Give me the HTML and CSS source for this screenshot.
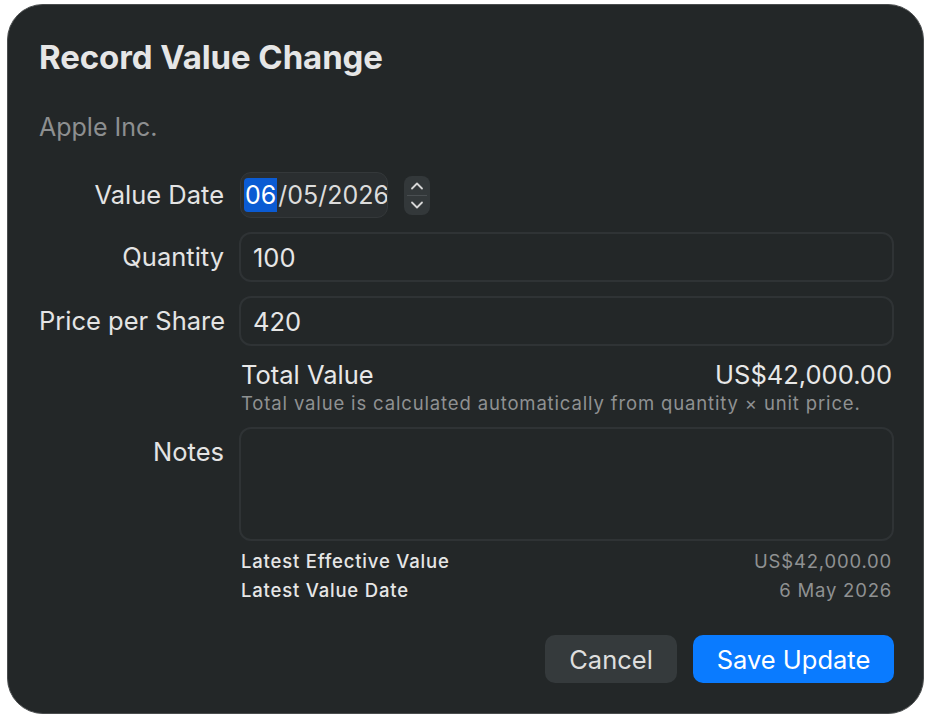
FILE: index.html
```html
<!DOCTYPE html>
<html lang="en">
<head>
<meta charset="UTF-8">
<title>Record Value Change</title>
<link rel="stylesheet" href="styles.css">
</head>
<body>

<div class="dialog">
  <h1>Record Value Change</h1>
  <div class="asset">Apple Inc.</div>

  <div class="form">
    <label class="lbl lbl-date">Value Date</label>
    <div class="date-row">
      <div class="date-field"><span class="sel">06</span>/05/2026</div>
      <div class="stepper">
        <svg width="26" height="39" viewBox="0 0 26 39">
          <path d="M8 12.5l5-5 5 5" fill="none" stroke="#d6d6d6" stroke-width="1.8" stroke-linecap="round" stroke-linejoin="round"/>
          <line x1="3" y1="19.5" x2="23" y2="19.5" stroke="#4a4f52" stroke-width="1"/>
          <path d="M8 26.5l5 5 5-5" fill="none" stroke="#d6d6d6" stroke-width="1.8" stroke-linecap="round" stroke-linejoin="round"/>
        </svg>
      </div>
    </div>

    <label class="lbl">Quantity</label>
    <div class="field">100</div>

    <label class="lbl">Price per Share</label>
    <div class="field">420</div>

    <div></div>
    <div class="total">
      <div class="total-line"><span>Total Value</span><span>US$42,000.00</span></div>
      <div class="hint">Total value is calculated automatically from quantity × unit price.</div>
    </div>

    <label class="lbl lbl-notes">Notes</label>
    <div class="notes"></div>

    <div></div>
    <div class="meta">
      <div class="meta-line"><span>Latest Effective Value</span><span class="v">US$42,000.00</span></div>
      <div class="meta-line"><span>Latest Value Date</span><span class="v">6 May 2026</span></div>
    </div>
  </div>

  <div class="actions">
    <button class="btn cancel">Cancel</button>
    <button class="btn save">Save Update</button>
  </div>
</div>

</body>
</html>
```

FILE: styles.css
```css
body{margin:0;background:#fff;font-family:Inter,"Noto Sans",sans-serif;color:#e4e4e4}
.dialog{margin:4px 8px 0 7px;width:917px;height:710px;box-sizing:border-box;background:#232728;border:1px solid #4a4d4e;border-radius:36px;padding:32px 29px 0 31px}
h1{margin:0;font-size:33px;font-weight:700;line-height:40px;letter-spacing:-0.1px;color:#e6e6e6}
.asset{margin-top:35px;font-size:25px;line-height:30px;color:#8d8f90}
.form{margin-top:30px;display:grid;grid-template-columns:185px 1fr;column-gap:15px;align-items:start}
.lbl{text-align:right;font-size:25.5px;line-height:30px;color:#e4e4e4;padding-top:10px;white-space:nowrap}
.lbl-date{padding-top:8px}
.date-row{display:flex;align-items:center;gap:16px;height:46px;margin-bottom:14px}
.date-field{height:46px;box-sizing:border-box;padding:0 0 0 3px;width:148px;display:flex;align-items:center;font-size:25px;background:#2a2e30;border:1px solid #34383a;border-radius:11px;color:#dcdcdc;overflow:hidden;white-space:nowrap;margin-left:1px}
.sel{background:#0b5bd3;color:#fff;border-radius:4px 0 0 4px;padding:2px 1px;margin-right:1px}
.stepper{width:26px;height:39px;background:#33383a;border-radius:8px}
.stepper svg{display:block}
.field{height:50px;box-sizing:border-box;border:2px solid #2f3335;border-radius:12px;padding:0 12px;display:flex;align-items:center;font-size:25.5px;color:#e6e6e6;margin-bottom:14px}
.total{padding:0 2px}
.total-line{display:flex;justify-content:space-between;font-size:25.5px;line-height:30px;color:#e8e8e8}
.hint{font-size:18.5px;line-height:24px;letter-spacing:0.85px;color:#8f9192;margin-top:1px;white-space:nowrap}
.notes{grid-column:2;height:114px;box-sizing:border-box;border:2px solid #2f3335;border-radius:12px;margin-top:12px}
.lbl-notes{margin-top:12px}
.meta{padding:0 2px;margin-top:6px}
.meta-line{display:flex;justify-content:space-between;font-size:18.5px;line-height:29px;font-weight:500;letter-spacing:0.8px;color:#e6e6e6}
.meta-line .v{font-weight:400;color:#8f9192}
.actions{display:flex;justify-content:flex-end;gap:16px;margin-top:30px}
.btn{border:none;font-family:inherit;font-size:25.5px;height:48px;border-radius:10px;color:#f2f2f2;padding:0}
.cancel{width:132px;background:#353a3c;color:#dedede}
.save{width:201px;background:#0a7bff;color:#fff}
```
